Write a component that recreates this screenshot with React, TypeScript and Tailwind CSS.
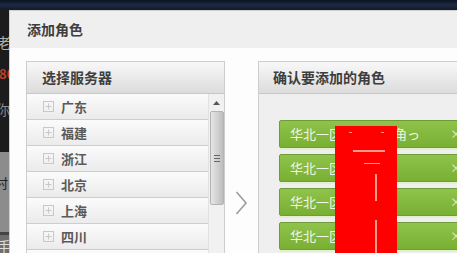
import React from "react";

const font = { fontFamily: '"Noto Sans CJK SC", "Noto Sans", sans-serif' };

function PlusBox() {
  return (
    <svg width="11" height="11" viewBox="0 0 11 11" className="shrink-0">
      <rect x="0.5" y="0.5" width="10" height="10" fill="none" stroke="#c8c8c8" />
      <line x1="5.5" y1="2.5" x2="5.5" y2="8.5" stroke="#c8c8c8" />
      <line x1="2.5" y1="5.5" x2="8.5" y2="5.5" stroke="#c8c8c8" />
    </svg>
  );
}

const regions = ["广东", "福建", "浙江", "北京", "上海", "四川", "重庆"];
const items = ["华北一区某某某某角っ", "华北一区某某某", "华北一区某某某", "华北一区某某某"];

export default function App() {
  return (
    <div
      className="relative w-[457px] h-[253px] overflow-hidden bg-[#1a1a1a]"
      style={font}
    >
      {/* top strip */}
      <div className="h-[10px] bg-gradient-to-b from-[#0b1322] via-[#1d2a40] to-[#121a28]" />
      <div className="flex h-[243px]">
        {/* background page peeking on the left */}
        <div className="w-[9px] shrink-0 flex flex-col overflow-hidden bg-[#1c1c1c] leading-none">
          <div className="h-[25px] shrink-0" />
          <div className="text-[14px] text-[#b0b0b0] -ml-[3px] h-[32px] shrink-0">老</div>
          <div className="text-[13px] text-[#c0402a] font-bold -ml-[1px] h-[35px] shrink-0">80</div>
          <div className="text-[14px] text-[#8a8a8a] -ml-[4px] h-[50px] shrink-0">你</div>
          <div className="h-[80px] shrink-0 bg-[#8c8c8c] flex flex-col">
            <div className="h-[24px]" />
            <div className="text-[13px] text-[#222] -ml-[5px]">村</div>
          </div>
          <div className="h-[3px] shrink-0 bg-[#444]" />
          <div className="flex-1 bg-[#6e6e6e] text-[14px] text-[#dcdcdc] -ml-[3px] pt-[4px]">手</div>
        </div>

        {/* dialog */}
        <div className="flex-1 min-w-0 overflow-hidden flex flex-col bg-white border-l border-t border-[#cfcfcf]">
          <div className="h-[37px] shrink-0 bg-[#efefef] pl-[17px] flex items-center text-[14px] font-bold text-[#3e3e3e]">
            添加角色
          </div>
          <div className="flex-1 flex pt-[13px] pl-[16px] bg-[#fdfdfd]">
            {/* left panel */}
            <div className="w-[199px] shrink-0 border border-[#cdcdcd] flex flex-col">
              <div className="h-[32px] shrink-0 bg-gradient-to-b from-[#f8f8f8] to-[#dcdcdc] border-b border-[#c8c8c8] flex items-center pl-[15px] text-[14px] font-bold text-[#3e3e3e]">
                选择服务器
              </div>
              <div className="flex flex-1">
                <div className="flex-1 flex flex-col">
                  {regions.map((r) => (
                    <div
                      key={r}
                      className="h-[26px] shrink-0 flex items-center pl-[16px] gap-[7px] bg-gradient-to-b from-[#fbfbfb] to-[#ebebeb] border-b border-[#cdcdcd] text-[13px] font-bold text-[#5a5a5a]"
                    >
                      <PlusBox />
                      <span>{r}</span>
                    </div>
                  ))}
                </div>
                {/* scrollbar */}
                <div className="w-[16px] shrink-0 bg-[#f1f1f1] border-l border-[#e2e2e2] flex flex-col items-center">
                  <div className="h-[17px] flex items-center justify-center">
                    <svg width="7" height="4" viewBox="0 0 7 4">
                      <polygon points="3.5,0 7,4 0,4" fill="#555" />
                    </svg>
                  </div>
                  <div className="w-[14px] h-[94px] rounded-[2px] border border-[#b4b4b4] bg-gradient-to-r from-[#e6e6e6] via-[#d2d2d2] to-[#bdbdbd] flex items-center justify-center">
                    <div className="flex flex-col gap-[2px]">
                      <div className="w-[6px] h-px bg-[#666]" />
                      <div className="w-[6px] h-px bg-[#666]" />
                      <div className="w-[6px] h-px bg-[#666]" />
                    </div>
                  </div>
                </div>
              </div>
            </div>

            {/* arrow gap */}
            <div className="w-[33px] shrink-0 flex justify-center pt-[130px]">
              <svg width="13" height="24" viewBox="0 0 13 24">
                <polyline points="1.5,1 11,12 1.5,23" fill="none" stroke="#9c9c9c" strokeWidth="1.6" />
              </svg>
            </div>

            {/* right panel */}
            <div className="w-[230px] shrink-0 border-l border-t border-[#cdcdcd] flex flex-col">
              <div className="h-[32px] shrink-0 bg-gradient-to-b from-[#f8f8f8] to-[#dcdcdc] border-b border-[#c8c8c8] flex items-center pl-[14px] text-[14px] font-bold text-[#3e3e3e]">
                确认要添加的角色
              </div>
              <div className="flex-1 bg-[#efefef] pt-[26px] pl-[20px] flex flex-col gap-[6px]">
                {items.map((t, i) => (
                  <div
                    key={i}
                    className="w-[196px] h-[28px] shrink-0 rounded-[2px] border border-[#6e9c38] bg-gradient-to-b from-[#8fc34a] to-[#79af33] shadow-[0_2px_0_#e2f0cc] flex items-center justify-between pl-[10px] pr-[12px] text-[13px] text-[#f3f6e2] whitespace-nowrap"
                  >
                    <span>{t}</span>
                    <span className="text-[12px] text-[#e4efcc]">×</span>
                  </div>
                ))}
              </div>
            </div>
          </div>
        </div>
      </div>

      {/* red redaction overlay */}
      <div className="absolute left-[335px] top-[126px] w-[62px] h-[130px] bg-[#ff0000]">
        <div className="absolute left-[18px] top-[24px] w-[32px] h-[2px] bg-[#ff9a8a]" />
        <div className="absolute left-[29px] top-[37px] w-[16px] h-px bg-[#ff9a8a]" />
        <div className="absolute left-[40px] top-[48px] w-[2px] h-[27px] bg-[#ff9a8a]" />
        <div className="absolute left-[40px] top-[94px] w-[2px] h-[36px] bg-[#ff9a8a]" />
        <div className="absolute left-[14px] top-[6px] w-[3px] h-px bg-[#ff9a8a]" />
        <div className="absolute left-[46px] top-[6px] w-[3px] h-px bg-[#ff9a8a]" />
      </div>
    </div>
  );
}
